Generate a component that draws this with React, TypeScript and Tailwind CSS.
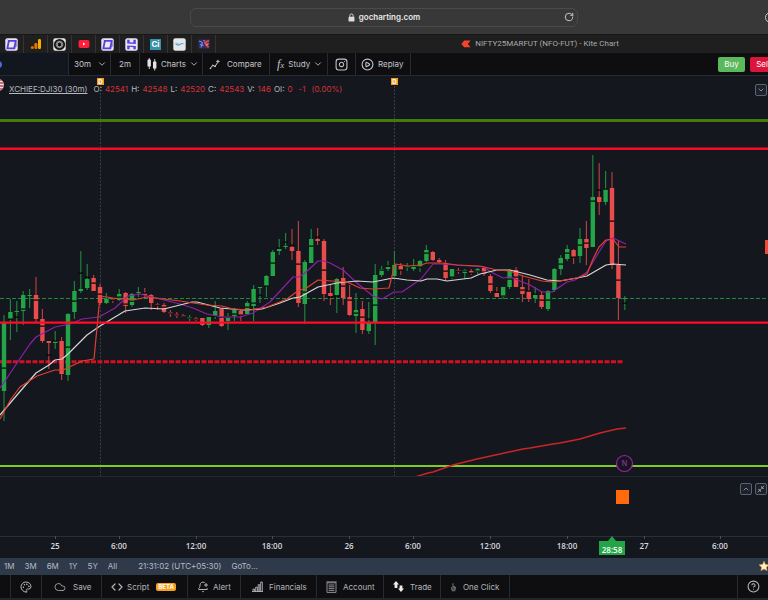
import type { ReactNode } from "react";
import {
  BellPlus,
  ChevronDown,
  ChevronUp,
  CircleHelp,
  CirclePlay,
  Cloud,
  Code,
  Instagram,
  Minimize2,
  Palette,
  RotateCw,
} from "lucide-react";

type Candle = {
  color: "g" | "r";
  high: number;
  top: number;
  bottom: number;
  low: number;
  mark?: number;
};

type Row = ["g" | "r", number, number, number, number, number?];

// color, high, body top, body bottom, low, mark
const rows: Row[] = [
  ["g", 315, 323, 391, 421, 368],
  ["g", 299, 312, 319, 340, 319],
  ["g", 301, 311, 312, 332, 317],
  ["g", 291, 295, 311, 325, 309],
  ["g", 289, 295, 296, 308],
  ["r", 277, 295, 319, 322, 300],
  ["r", 309, 319, 341, 343, 326],
  ["r", 341, 341, 343, 369, 355],
  ["g", 331, 341, 343, 349, 341],
  ["r", 337, 341, 374, 380],
  ["g", 313, 314, 375, 381, 347],
  ["g", 281, 291, 312, 319, 301],
  ["g", 251, 289, 291, 293, 273],
  ["g", 264, 279, 288, 290, 277],
  ["r", 275, 278, 291, 291, 283],
  ["r", 284, 287, 303, 305, 294],
  ["g", 293, 299, 303, 304],
  ["r", 298, 299, 300, 303, 300],
  ["g", 289, 294, 300, 301, 297],
  ["r", 292, 293, 306, 313, 304],
  ["g", 293, 294, 305, 307, 301],
  ["g", 287, 292, 293, 297],
  ["r", 288, 293, 295, 298, 293],
  ["r", 294, 295, 303, 310],
  ["r", 303, 304, 305, 310, 305],
  ["r", 303, 305, 312, 313, 307],
  ["r", 310, 312, 314, 317, 313],
  ["r", 312, 314, 316, 318, 315],
  ["r", 314, 315, 317, 317, 316],
  ["g", 315, 317, 319, 321, 318],
  ["r", 317, 318, 320, 321, 319],
  ["r", 318, 318, 325, 326],
  ["g", 317, 317, 325, 328],
  ["g", 301, 311, 316, 319, 316],
  ["r", 308, 309, 326, 327, 317],
  ["g", 313, 317, 321, 330, 317],
  ["g", 308, 310, 316, 321, 314],
  ["r", 309, 311, 315, 321, 315],
  ["g", 301, 303, 314, 314, 307],
  ["g", 285, 289, 306, 321, 303],
  ["g", 287, 287, 288, 303, 295],
  ["g", 275, 276, 286, 297, 286],
  ["g", 250, 252, 276, 276, 263],
  ["g", 239, 249, 251, 255, 248],
  ["g", 233, 246, 247, 249, 242],
  ["r", 229, 247, 251, 260, 245],
  ["r", 221, 251, 303, 307, 264],
  ["g", 260, 262, 304, 324, 292],
  ["g", 229, 239, 263, 263, 246],
  ["r", 228, 239, 241, 245, 237],
  ["r", 239, 241, 294, 301, 270],
  ["r", 285, 293, 296, 305, 297],
  ["g", 278, 279, 295, 313, 296],
  ["r", 267, 278, 298, 305, 286],
  ["r", 285, 297, 315, 316, 300],
  ["g", 293, 310, 316, 333, 313],
  ["r", 301, 309, 330, 334, 317],
  ["g", 302, 322, 331, 334, 319],
  ["g", 264, 275, 322, 345, 305],
  ["g", 266, 269, 275, 277, 270],
  ["g", 261, 267, 269, 271, 266],
  ["g", 251, 265, 276, 277],
  ["r", 263, 266, 270, 275, 270],
  ["g", 263, 266, 268, 271, 267],
  ["g", 259, 265, 269, 271, 266],
  ["g", 260, 261, 267, 272, 267],
  ["g", 245, 250, 261, 262, 253],
  ["r", 251, 252, 260, 261],
  ["r", 258, 260, 262, 263],
  ["r", 260, 263, 278, 281, 271],
  ["g", 269, 269, 277, 279, 277],
  ["r", 268, 270, 271, 274, 271],
  ["g", 269, 270, 273, 279, 271],
  ["r", 269, 271, 273, 275, 273],
  ["g", 268, 269, 272, 274, 271],
  ["r", 267, 268, 274, 276, 272],
  ["r", 274, 276, 291, 293, 284],
  ["r", 287, 293, 297, 297, 292],
  ["g", 287, 287, 297, 299, 296],
  ["g", 269, 270, 287, 289, 279],
  ["r", 267, 270, 287, 287, 277],
  ["r", 275, 287, 294, 302, 290],
  ["r", 279, 291, 299, 302, 291],
  ["g", 287, 295, 298, 303, 294],
  ["r", 291, 295, 307, 309, 300],
  ["g", 290, 291, 309, 311, 300],
  ["g", 268, 269, 290, 292],
  ["g", 255, 258, 269, 275, 264],
  ["g", 245, 249, 259, 261, 253],
  ["r", 249, 250, 257, 264, 257],
  ["g", 228, 239, 256, 263, 245],
  ["r", 221, 239, 248, 265, 243],
  ["g", 155, 197, 247, 247, 201],
  ["r", 163, 197, 202, 215, 190],
  ["g", 171, 189, 202, 205, 189],
  ["r", 172, 188, 265, 269, 221],
  ["r", 240, 265, 298, 320, 280],
  ["g", 296, 298, 299, 310, 303],
];

const candles: Candle[] = rows.map(([color, high, top, bottom, low, mark]) => ({
  color,
  high,
  top,
  bottom,
  low,
  mark,
}));

const whiteLine =
  "0,415 17,395 36,373 49,365 55,360 62,359 68,354 87,335 100,326 125,311 145,308 164,309 180,305 192,302 197,302 220,308 243,310 262,309 280,303 293,298 300,297 318,287 337,283 357,281 373,282 393,278 407,280 421,281 427,279 437,279 447,281 471,278 480,274 497,270 510,270 530,275 547,280 560,281 577,278 587,276 606,265 613,264 626,265";
const purpleLine =
  "0,388 7,378 17,363 30,344 36,337 55,327 70,324 82,319 99,317 115,308 128,296 140,294 160,299 180,304 193,308 207,314 223,317 240,317 253,313 270,302 293,277 299,277 305,273 318,261 324,261 330,263 343,270 357,283 373,296 382,299 394,292 402,292 421,279 433,264 440,264 457,265 484,267 491,272 503,278 510,277 530,285 542,292 552,292 567,282 575,280 587,272 599,252 606,241 613,238 626,244";
const redLine =
  "0,419 11,399 20,387 37,376 55,370 63,370 82,361 94,359 100,296 113,298 133,300 147,297 180,301 193,303 207,305 222,306 233,309 250,310 267,307 287,299 299,290 305,289 318,280 331,281 347,282 360,288 373,289 389,288 395,264 408,266 421,265 427,263 443,263 457,265 480,266 497,270 510,271 523,276 542,281 553,282 577,278 587,274 593,259 599,247 606,240 613,239 619,247 626,247";
const slowLine =
  "415,477 428,473 433,472 453,465 477,459 500,454 523,449 530,448 553,444 560,443 580,439 600,433 617,429 626,428";

const timeLabels = [
  { x: 55, text: "25" },
  { x: 119, text: "6:00" },
  { x: 196, text: "12:00" },
  { x: 272, text: "18:00" },
  { x: 349, text: "26" },
  { x: 413, text: "6:00" },
  { x: 490, text: "12:00" },
  { x: 567, text: "18:00" },
  { x: 644, text: "27" },
  { x: 720, text: "6:00" },
];

const quote = [
  { label: "O:", value: "42541" },
  { label: "H:", value: "42548" },
  { label: "L:", value: "42520" },
  { label: "C:", value: "42543" },
  { label: "V:", value: "146" },
  { label: "OI:", value: "0" },
];

function PurpleKnot() {
  return (
    <svg viewBox="0 0 13 13" className="size-[13px]">
      <rect x="0.3" y="0.3" width="12.4" height="12.4" rx="2" fill="#e9e6f8" />
      <path
        d="M3.8 2.8H10.6L9.4 10.4H2.4L3.8 2.8Z"
        fill="none"
        stroke="#5b3fd6"
        strokeWidth="1.8"
      />
      <path d="M2.6 1.9L5 4M10.6 8.6L8.2 9.2M10.8 2.2L11.2 8.6" stroke="#5b3fd6" strokeWidth="0.9" />
    </svg>
  );
}

function AnalyticsIcon() {
  return (
    <svg viewBox="0 0 12 12" className="size-3">
      <rect x="8" y="1" width="3" height="10" rx="1.2" fill="#f9ab00" />
      <rect x="4.4" y="5" width="3" height="6" rx="1.2" fill="#e37400" />
      <circle cx="2.3" cy="9.5" r="1.5" fill="#e37400" />
    </svg>
  );
}

function ChatIcon() {
  return (
    <svg viewBox="0 0 13 13" className="size-[13px]">
      <rect x="0.3" y="0.3" width="12.4" height="12.4" rx="2" fill="#e8e8e8" />
      <circle cx="6.5" cy="6.5" r="5.6" fill="#161616" />
      <g fill="none" stroke="#bdbdbd" strokeWidth="0.6">
        <ellipse cx="6.5" cy="6.5" rx="3.6" ry="2.2" />
        <ellipse cx="6.5" cy="6.5" rx="3.6" ry="2.2" transform="rotate(60 6.5 6.5)" />
        <ellipse cx="6.5" cy="6.5" rx="3.6" ry="2.2" transform="rotate(120 6.5 6.5)" />
      </g>
    </svg>
  );
}

function YoutubeIcon() {
  return (
    <svg viewBox="0 0 12 12" className="size-3">
      <rect x="0.5" y="2" width="11" height="8" rx="2" fill="#ff1f3a" />
      <path d="M5 4.6V7.4L7.4 6Z" fill="#fff" />
    </svg>
  );
}

function PurpleH() {
  return (
    <svg viewBox="0 0 13 13" className="size-[13px]">
      <rect x="0.3" y="0.3" width="12.4" height="12.4" rx="2" fill="#e9e6f8" />
      <path
        d="M2.2 1.8H4.6V4.2L8.4 4.6V1.8H10.8V6L2.2 5.4ZM2.2 7.4L10.8 8V11.2H8.4V9.2L4.6 8.8V11.2H2.2Z"
        fill="#5b3fd6"
      />
    </svg>
  );
}

function CiIcon() {
  return (
    <span className="flex size-[11px] items-center justify-center bg-[#3792ae] text-[8px] leading-none font-bold text-white">
      Ci
    </span>
  );
}

function SwooshIcon() {
  return (
    <svg viewBox="0 0 13 13" className="size-[13px]">
      <rect x="0.3" y="0.3" width="12.4" height="12.4" rx="2" fill="#e4e6e8" />
      <path d="M2.6 5.4Q4.6 8 6.8 6.6T10.4 5.6" fill="none" stroke="#4aa8dc" strokeWidth="1.2" />
      <path d="M3.4 4.8Q5 6 6.4 5.6" fill="none" stroke="#8fc7e6" strokeWidth="0.8" />
    </svg>
  );
}

function BullBearIcon() {
  return (
    <svg viewBox="0 0 12 12" className="size-3">
      <rect x="0.5" y="1.5" width="11" height="9" fill="#2a2f70" />
      <path d="M1 3L4.5 4.5L3 9.5M2 6.5L5.5 7.5" stroke="#8c98de" strokeWidth="1" fill="none" />
      <path d="M11 2.5L6.8 4.6L10.5 9.5M7 7L11 5.5" stroke="#e2483f" strokeWidth="1.8" fill="none" />
      <path d="M5.6 2L6.6 3.2M8.4 7L9.6 6.2" stroke="#e6e6f0" strokeWidth="0.8" />
    </svg>
  );
}

function KiteIcon() {
  return (
    <svg viewBox="0 0 10 8" className="h-2 w-[10px]">
      <path d="M3.2 0.5H9.6L6.8 4L9.6 7.3H3.2L0.3 4Z" fill="#f6432b" />
    </svg>
  );
}

function LockIcon() {
  return (
    <svg viewBox="0 0 8 10" className="h-[9px] w-[7px]">
      <rect x="0.6" y="4.2" width="6.8" height="5.4" rx="1" fill="#dcdcdc" />
      <path d="M2.1 4.4V2.8a1.9 1.9 0 0 1 3.8 0V4.4" fill="none" stroke="#dcdcdc" strokeWidth="1.1" />
    </svg>
  );
}

function CandlesIcon() {
  return (
    <svg viewBox="0 0 10 13" className="h-[13px] w-[10px]" fill="#e2e4e8">
      <rect x="0.5" y="1.5" width="3.4" height="7" rx="0.6" />
      <rect x="1.8" y="0" width="0.9" height="11" />
      <rect x="6" y="3.5" width="3.4" height="7" rx="0.6" />
      <rect x="7.3" y="1" width="0.9" height="11.5" />
    </svg>
  );
}

function TrendIcon() {
  return (
    <svg viewBox="0 0 11 11" className="size-[11px]" fill="none" stroke="#d3d5da">
      <path d="M1.4 9.2L3.8 6.4L6 7.4L8.6 3.6" strokeWidth="1" />
      <path d="M7.2 2.4H10.6M8.9 0.8V4" strokeWidth="0.9" />
      <circle cx="1.4" cy="9.3" r="0.4" fill="#d3d5da" />
      <circle cx="3.8" cy="6.3" r="0.4" fill="#d3d5da" />
      <circle cx="6" cy="7.5" r="0.4" fill="#d3d5da" />
    </svg>
  );
}

function BarsIcon() {
  return (
    <svg viewBox="0 0 11 11" className="size-[11px]" fill="none" stroke="#c3c5c9" strokeWidth="0.8">
      <path d="M0 10.5H11M1 10.5V8H2.6V10.5M3.7 10.5V6.2H5.3V10.5M6.2 10.5V3.6H7.7V10.5M8.7 10.5V1H10.3V10.5" />
    </svg>
  );
}

function ListIcon() {
  return (
    <svg viewBox="0 0 11 12" className="h-3 w-[11px]" fill="none" stroke="#9b9da1" strokeWidth="0.9">
      <path d="M1 1.8H10V11.4H1ZM0.2 0.9H10.8M2.6 4H8.4M2.6 5.8H8.4M2.6 7.6H8.4M2.6 9.4H8.4" />
    </svg>
  );
}

function TradeIcon() {
  return (
    <svg viewBox="0 0 11 11" className="size-[11px]" fill="#ededed">
      <path d="M3 0L6 3.4H4.4V7H1.6V3.4H0Z" />
      <path d="M8 11L5 7.6H6.6V4.4H9.4V7.6H11Z" />
    </svg>
  );
}

function FingerIcon() {
  return (
    <svg viewBox="0 0 7 10" className="h-[10px] w-[7px]">
      <path
        d="M3 6V1.2M1.4 5.2L2.2 8.8H4.8L5.5 5.2L3 4.4M3 6.4V8M4.2 5V7.6"
        fill="none"
        stroke="#85878a"
        strokeWidth="0.9"
      />
    </svg>
  );
}

function StarIcon() {
  return (
    <svg viewBox="0 0 10 10" className="size-[10px]">
      <path
        d="M5 0.4L6.4 3.5L9.8 3.9L7.3 6.2L8 9.6L5 7.9L2 9.6L2.7 6.2L0.2 3.9L3.6 3.5Z"
        fill="#fff3d6"
        stroke="#f5a623"
        strokeWidth="0.7"
      />
    </svg>
  );
}

function FlagIcon() {
  return (
    <svg viewBox="0 0 12 12" className="size-3">
      <clipPath id="flag">
        <circle cx="6" cy="6" r="6" />
      </clipPath>
      <g clipPath="url(#flag)">
        <rect width="12" height="12" fill="#e6e6ea" />
        <path d="M0 1H12M0 4H12M0 7H12M0 10H12" stroke="#c9414d" strokeWidth="1.5" />
        <rect width="6" height="6" fill="#39507f" />
      </g>
    </svg>
  );
}

const favicons = [
  { name: "Workspace", icon: <PurpleKnot /> },
  { name: "Analytics", icon: <AnalyticsIcon /> },
  { name: "Assistant", icon: <ChatIcon /> },
  { name: "Videos", icon: <YoutubeIcon /> },
  { name: "Projects", icon: <PurpleKnot /> },
  { name: "Hosting", icon: <PurpleH /> },
  { name: "Chartink", icon: <CiIcon /> },
  { name: "Broker", icon: <SwooshIcon /> },
  { name: "Markets", icon: <BullBearIcon /> },
];

function BrowserBar() {
  return (
    <div className="relative flex h-[34px] shrink-0 items-center justify-center overflow-hidden bg-[#383838] px-4">
      <button
        type="button"
        className="flex h-[19px] w-full max-w-[388px] items-center rounded-md border border-[#4a4a4a] px-[3px]"
      >
        <span className="flex-1" />
        <span className="flex items-center gap-1 text-[8px] font-semibold text-[#e8e8e8]">
          <LockIcon />
          gocharting.com
        </span>
        <span className="flex flex-1 justify-end">
          <RotateCw className="size-[10px] text-[#c6c6c6]" strokeWidth={2.4} />
        </span>
      </button>
      <span className="absolute top-3 -right-2 size-[11px] rounded-full border border-[#c6c6c6]" />
    </div>
  );
}

function TabStrip() {
  return (
    <nav className="flex h-[19px] shrink-0 border-t border-[#171717] bg-[#1f1f1f]">
      {favicons.map((tab) => (
        <a
          key={tab.name}
          href="#"
          aria-label={tab.name}
          className="flex w-6 shrink-0 items-center justify-center border-r border-[#343434]"
        >
          {tab.icon}
        </a>
      ))}
      <a
        href="#"
        className="flex flex-1 items-center justify-center gap-1 pl-24 font-['Roboto',sans-serif] text-[8px] whitespace-nowrap text-[#a9a9a9]"
      >
        <KiteIcon />
        NIFTY25MARFUT (NFO-FUT) - Kite Chart
      </a>
    </nav>
  );
}

function ToolButton({
  className,
  label,
  children,
}: {
  className: string;
  label?: string;
  children: ReactNode;
}) {
  return (
    <button
      type="button"
      aria-label={label}
      className={`flex shrink-0 items-center border-r border-[#262a31] whitespace-nowrap ${className}`}
    >
      {children}
    </button>
  );
}

function Toolbar() {
  return (
    <div className="flex h-[23px] shrink-0 overflow-hidden border-b border-[#262a31] bg-[#0e0e10] text-[8px] text-[#c3c5ca]">
      <ToolButton label="Symbol search" className="w-[69px] bg-[#12161e]">
        <span className="-ml-[5px] size-[7px] rounded-full bg-[#4a6fe0]" />
      </ToolButton>
      <ToolButton className="w-[42px] justify-between pr-[3px] pl-[5px]">
        30m
        <ChevronDown className="size-[10px]" />
      </ToolButton>
      <ToolButton className="w-[29px] justify-center">2m</ToolButton>
      <ToolButton className="w-[63px] gap-1 pl-[7px]">
        <CandlesIcon />
        Charts
        <ChevronDown className="-ml-px size-[10px]" />
      </ToolButton>
      <ToolButton className="w-[67px] gap-[7px] pl-[6px]">
        <TrendIcon />
        Compare
      </ToolButton>
      <ToolButton className="w-[58px] gap-1 pl-[7px]">
        <span className="font-['Liberation_Serif',serif] text-[12px] leading-none italic">
          f<span className="text-[9px]">x</span>
        </span>
        Study
        <ChevronDown className="-ml-px size-[10px]" />
      </ToolButton>
      <ToolButton label="Snapshot" className="w-7 justify-center">
        <Instagram className="size-[13px]" />
      </ToolButton>
      <ToolButton className="w-[55px] gap-1 pl-[5px]">
        <CirclePlay className="size-[13px]" />
        Replay
      </ToolButton>
      <div className="-mr-2 ml-auto flex shrink-0 items-center gap-[5px] pl-2 text-white">
        <button type="button" className="h-[15px] w-[27px] rounded-xs bg-[#5cb85c]">
          Buy
        </button>
        <button type="button" className="h-[15px] w-[26px] rounded-xs bg-[#dc143c]">
          Sell
        </button>
      </div>
    </div>
  );
}

function PriceChart() {
  return (
    <svg className="block h-[400px] w-full" role="img" aria-label="DJI30 30 minute candles">
      <g transform="translate(0,-76)">
        {[100, 394].map((x) => (
          <g key={x}>
            <line
              x1={x + 0.5}
              x2={x + 0.5}
              y1="86"
              y2="476"
              stroke="#3b3f46"
              strokeDasharray="2 1.5"
            />
            <rect x={x - 3} y="78" width="7" height="7" fill="#f5a01d" />
            <text x={x + 0.5} y="84" fontSize="6" fontWeight="700" fill="#fff" textAnchor="middle">
              D
            </text>
          </g>
        ))}

        <line x1="0" x2="100%" y1="120.5" y2="120.5" stroke="#457a0b" strokeWidth="3" />
        <line x1="0" x2="100%" y1="298.5" y2="298.5" stroke="#1f8a3f" strokeDasharray="4 2" />
        <line
          x1="0"
          x2="624"
          y1="361.7"
          y2="361.7"
          stroke="#d40f22"
          strokeWidth="3"
          strokeDasharray="5 1.5"
        />
        <line x1="0" x2="100%" y1="466" y2="466" stroke="#7fcb25" strokeWidth="2.2" />

        {candles.map((c, i) => {
          const x = 4 + i * 6.4;
          return (
            <g key={i}>
              <line
                x1={x}
                x2={x}
                y1={c.high}
                y2={c.low}
                stroke={c.color === "g" ? "#1f8a40" : "#c04145"}
                strokeWidth="1.1"
              />
              <rect
                x={x - 2.2}
                y={c.top}
                width="4.4"
                height={Math.max(c.bottom - c.top, 1)}
                fill={c.color === "g" ? "#22a447" : "#e84c4b"}
              />
              {c.mark && (
                <rect x={x - 2.4} y={c.mark - 0.5} width="4.8" height="1.2" fill="#050505" />
              )}
            </g>
          );
        })}

        <g fill="none" strokeWidth="1.2" strokeLinejoin="round">
          <polyline points={purpleLine} stroke="#8f1fa8" />
          <polyline points={whiteLine} stroke="#d6d6d8" />
          <polyline points={redLine} stroke="#e0402f" />
          <polyline points={slowLine} stroke="#cc2424" strokeWidth="1.5" />
        </g>

        <line x1="0" x2="100%" y1="148.8" y2="148.8" stroke="#f50c28" strokeWidth="2.4" />
        <line x1="0" x2="100%" y1="322.6" y2="322.6" stroke="#ff0c28" strokeWidth="2.4" />

        <circle cx="624.5" cy="463.5" r="8" fill="#14181e" stroke="#a31db0" strokeWidth="1.2" />
        <text x="624.5" y="466" fontSize="7" fill="#b32bc0" textAnchor="middle">
          N
        </text>
      </g>
    </svg>
  );
}

function IconButton({ label, children }: { label: string; children: ReactNode }) {
  return (
    <button
      type="button"
      aria-label={label}
      className="flex size-3 items-center justify-center rounded-xs border border-[#5b626e] bg-[#1c222c] text-[#b9bdc5]"
    >
      {children}
    </button>
  );
}

function ChartArea() {
  return (
    <main className="relative shrink-0 overflow-hidden bg-[#14171e]">
      <PriceChart />
      <div className="absolute top-[3px] -left-2">
        <FlagIcon />
      </div>
      <div className="absolute top-2 left-[9px] flex gap-[6px] text-[8px] leading-[10px] whitespace-nowrap text-[#b6b9bf]">
        <span className="underline underline-offset-1">XCHIEF:DJI30 (30m)</span>
        <span className="flex gap-[3px]">
          {quote.map((item) => (
            <span key={item.label} className="flex gap-[3px]">
              {item.label}
              <span className="text-[#d23338]">{item.value}</span>
            </span>
          ))}
        </span>
        <span className="text-[#d23338]">-1</span>
        <span className="text-[#d23338]">(0.00%)</span>
      </div>
      <div className="absolute top-2 right-px">
        <IconButton label="Collapse pane">
          <ChevronDown className="size-2" />
        </IconButton>
      </div>
      <div className="absolute top-[164px] right-0 h-[14px] w-[3px] bg-[#ef4a33]" />

      <section className="flex h-[60px] items-start justify-end gap-[3px] border-t border-[#23272e] pt-[6px] pr-px">
        <IconButton label="Move pane up">
          <ChevronUp className="size-2" />
        </IconButton>
        <IconButton label="Minimize pane">
          <Minimize2 className="size-2" />
        </IconButton>
      </section>
      <div className="absolute top-[414px] left-[616px] h-[14px] w-[13px] bg-[#ff6a0a]" />
    </main>
  );
}

function TimeAxis() {
  return (
    <svg
      className="block h-[22px] w-full shrink-0 bg-[#14171e] font-['Open_Sans',sans-serif]"
      role="img"
      aria-label="Time axis"
    >
      <line x1="0" x2="100%" y1="0.5" y2="0.5" stroke="#2a2e35" />
      {timeLabels.map((label) => (
        <g key={label.x}>
          <line x1={label.x + 0.5} x2={label.x + 0.5} y1="0" y2="3" stroke="#4a4e55" />
          <text x={label.x} y="13" fontSize="8" fontWeight="600" fill="#d9dade" textAnchor="middle">
            {label.text}
          </text>
        </g>
      ))}
      <path d="M599 5H608L612 0L616 5H625V19H599Z" fill="#22a447" />
      <text x="612" y="17" fontSize="8" fontWeight="600" fill="#fff" textAnchor="middle">
        28:58
      </text>
    </svg>
  );
}

function RangeBar() {
  return (
    <div className="flex h-[17px] shrink-0 items-center overflow-hidden bg-[#2e394a] pb-px pl-1 text-[8px] whitespace-nowrap text-[#b4bac4]">
      <div className="flex gap-[10px]">
        {["1M", "3M", "6M", "1Y", "5Y", "All"].map((range) => (
          <button key={range} type="button">
            {range}
          </button>
        ))}
      </div>
      <span className="ml-[21px]">21:31:02 (UTC+05:30)</span>
      <button type="button" className="ml-[10px]">
        GoTo...
      </button>
      <button type="button" aria-label="Favourites" className="-mr-px ml-auto">
        <StarIcon />
      </button>
    </div>
  );
}

function BottomBar() {
  return (
    <footer className="flex h-[25px] shrink-0 overflow-hidden border-b-2 border-[#22252b] bg-[#0e0e10] text-[8px] text-[#b3b5b9]">
      <ToolButton label="Menu" className="w-[11px]">
        <span />
      </ToolButton>
      <ToolButton label="Theme" className="w-[31px] justify-center">
        <Palette className="size-3" />
      </ToolButton>
      <ToolButton className="w-[60px] gap-[7px] pl-3">
        <Cloud className="size-3" strokeWidth={1.6} />
        Save
      </ToolButton>
      <ToolButton className="w-[86px] gap-1 pl-[9px]">
        <Code className="size-3" strokeWidth={2.4} />
        Script
        <span className="ml-[3px] rounded-xs bg-[#f9a01b] px-[2px] text-[6px] leading-2 font-bold text-white">
          BETA
        </span>
      </ToolButton>
      <ToolButton className="w-[53px] gap-1 pl-[9px]">
        <BellPlus className="size-3" />
        Alert
      </ToolButton>
      <ToolButton className="w-[76px] gap-[6px] pl-[11px]">
        <BarsIcon />
        Financials
      </ToolButton>
      <ToolButton className="w-[67px] gap-[6px] pl-[9px]">
        <ListIcon />
        Account
      </ToolButton>
      <ToolButton className="w-[57px] gap-[6px] pl-[9px]">
        <TradeIcon />
        Trade
      </ToolButton>
      <ToolButton className="w-[69px] gap-[6px] pl-[9px]">
        <FingerIcon />
        One Click
      </ToolButton>
      <button
        type="button"
        aria-label="Help"
        className="ml-auto flex w-[31px] shrink-0 items-center justify-center border-l border-[#262a31]"
      >
        <CircleHelp className="size-[13px]" />
      </button>
    </footer>
  );
}

export default function App() {
  return (
    <div className="flex min-h-screen flex-col overflow-hidden bg-[#14171e] font-['Inter','Liberation_Sans',sans-serif]">
      <BrowserBar />
      <TabStrip />
      <Toolbar />
      <ChartArea />
      <TimeAxis />
      <RangeBar />
      <BottomBar />
    </div>
  );
}
